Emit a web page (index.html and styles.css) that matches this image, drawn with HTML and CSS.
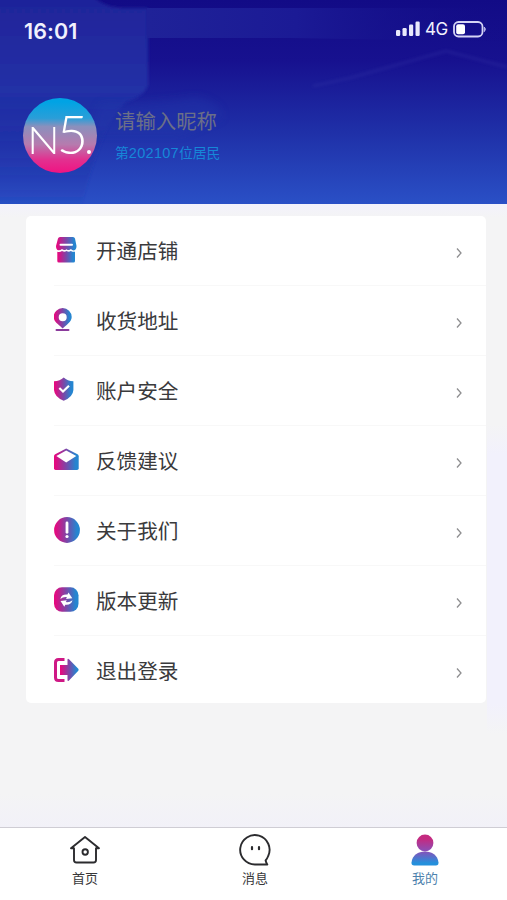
FILE: index.html
```html
<!DOCTYPE html>
<html lang="zh-CN">
<head>
  <meta charset="UTF-8">
  <meta name="viewport" content="width=device-width, initial-scale=1.0">
  <title>我的</title>
  <link rel="stylesheet" href="styles.css">
</head>
<body>
  <!-- shared gradients for the icons -->
  <svg class="defs" width="0" height="0">
    <defs>
      <linearGradient id="grad" x1="0" y1="0" x2="1" y2="0">
        <stop offset="0.05" stop-color="#e5097f"/>
        <stop offset="0.5" stop-color="#7a48a8"/>
        <stop offset="0.88" stop-color="#2585d0"/>
      </linearGradient>
      <linearGradient id="gradUser" gradientUnits="userSpaceOnUse" x1="0" y1="2" x2="0" y2="32">
        <stop offset="0.1" stop-color="#c42a80"/>
        <stop offset="0.5" stop-color="#8a4fb8"/>
        <stop offset="0.9" stop-color="#2490dc"/>
      </linearGradient>
    </defs>
  </svg>

  <header class="header">
    <svg class="header-bg" width="507" height="204" viewBox="0 0 507 204">
      <defs>
        <linearGradient id="bgMain" x1="0" y1="0" x2="0" y2="1">
          <stop offset="0" stop-color="#120b86"/>
          <stop offset="0.3" stop-color="#17118f"/>
          <stop offset="0.65" stop-color="#1f30a8"/>
          <stop offset="1" stop-color="#2a50c6"/>
        </linearGradient>
        <linearGradient id="bgLeft" x1="0" y1="0" x2="0" y2="1">
          <stop offset="0" stop-color="#1f2298"/>
          <stop offset="0.45" stop-color="#2030a6"/>
          <stop offset="1" stop-color="#2030a8" stop-opacity="0"/>
        </linearGradient>
        <linearGradient id="bgBand" x1="0" y1="0" x2="1" y2="0">
          <stop offset="0" stop-color="#1f2298"/>
          <stop offset="0.4" stop-color="#1b1a95"/>
          <stop offset="1" stop-color="#120b86" stop-opacity="0"/>
        </linearGradient>
        <filter id="soft"><feGaussianBlur stdDeviation="1.5"/></filter>
        <filter id="softer" x="-20%" width="140%" y="-20%" height="140%"><feGaussianBlur stdDeviation="4"/></filter>
      </defs>
      <rect width="507" height="204" fill="url(#bgMain)"/>
      <path d="M-10 -10H88Q100 8 125 8H148V85Q144 97 126 102Q100 125 80 214H-10Z" fill="url(#bgLeft)" filter="url(#soft)"/>
      <path d="M147 8H520V42L290 38H147Z" fill="url(#bgBand)"/>
      <path d="M313 86L350 78L446 51L507 67" fill="none" stroke="#3434a6" stroke-width="3" opacity="0.3" filter="url(#soft)"/>
      <path d="M100 104Q160 103 195 97Q222 102 222 118L180 135H90Z" fill="#2338aa" opacity="0.4" filter="url(#softer)"/>
    </svg>

    <div class="status-bar">
      <span class="time">16:01</span>
      <div class="status-right">
        <svg width="24" height="16" viewBox="0 0 24 16" fill="#e9e9fb">
          <rect x="0" y="9" width="4.2" height="6" rx="1.2"/>
          <rect x="6.5" y="7" width="4.2" height="8" rx="1.2"/>
          <rect x="13" y="3.5" width="4.2" height="11.5" rx="1.2"/>
          <rect x="19.5" y="0.5" width="4.2" height="14.5" rx="1.2"/>
        </svg>
        <span class="network">4G</span>
        <svg width="34" height="17" viewBox="0 0 34 17">
          <rect x="1" y="1" width="28.5" height="14.5" rx="4.5" fill="none" stroke="#d5d4f5" stroke-width="1.8"/>
          <rect x="3.2" y="3.2" width="8.8" height="10" rx="2" fill="#fff"/>
          <path d="M31.3 6Q33.5 8.2 31.3 10.6Z" fill="#b9b7e8" stroke="#b9b7e8"/>
        </svg>
      </div>
    </div>

    <div class="profile">
      <div class="avatar"><span class="avatar-n">N</span><span class="avatar-5">5</span><span class="avatar-dot"></span></div>
      <div class="profile-info">
        <div class="nickname">请输入昵称</div>
        <div class="resident">第<span>202107</span>位居民</div>
      </div>
    </div>
  </header>

  <main class="content">
    <ul class="menu">
      <li class="menu-item">
        <svg class="icon" viewBox="0 0 26 26">
          <path d="M6 0H19Q20.5 0 21 1.500L22.500 9Q22.500 13 19.800 13.400Q18 13.400 16.900 12Q15 14 12.500 12.200Q10 14 8 12Q6.500 13.400 4.500 13.300Q2 13 2 9L4 1.500Q4.500 0 6 0Z" fill="url(#grad)"/>
          <path d="M3.300 14.700Q6 15.300 8 14Q10.500 15.400 12.500 14Q14.700 15.400 16.900 14Q19 15.200 21 14.700V24Q21 25.500 19.500 25.500H4.800Q3.300 25.500 3.300 24Z" fill="url(#grad)"/>
          <path d="M6.500 7.700H18" stroke="#fff" stroke-width="2" stroke-linecap="round"/>
        </svg>
        <span class="menu-text">开通店铺</span>
        <svg class="arrow" viewBox="0 0 6 12"><path d="M1 1.500L5 6L1 10.500"/></svg>
      </li>
      <li class="menu-item">
        <svg class="icon" viewBox="0 0 26 26">
          <path fill-rule="evenodd" d="M8.700 1A9 9 0 0 1 17.700 10C17.700 15 12 18 8.700 21.500C5.500 18 -0.300 15 -0.300 10A9 9 0 0 1 8.700 1ZM8.700 6.200A4 4 0 1 0 8.700 14.200A4 4 0 1 0 8.700 6.200Z" fill="url(#grad)"/>
          <rect x="1.500" y="22" width="14" height="2" rx="1" fill="#8b3b9c"/>
        </svg>
        <span class="menu-text">收货地址</span>
        <svg class="arrow" viewBox="0 0 6 12"><path d="M1 1.500L5 6L1 10.500"/></svg>
      </li>
      <li class="menu-item">
        <svg class="icon" viewBox="0 0 26 26">
          <path d="M9.700 0.500Q13.500 4 19.400 4.200V13Q19 20 9.700 23.800Q0.500 20 0 13V4.200Q6 4 9.700 0.500Z" fill="url(#grad)"/>
          <path d="M5.300 11L9 14.500L15 8.700" fill="none" stroke="#fff" stroke-width="2.200"/>
        </svg>
        <span class="menu-text">账户安全</span>
        <svg class="arrow" viewBox="0 0 6 12"><path d="M1 1.500L5 6L1 10.500"/></svg>
      </li>
      <li class="menu-item">
        <svg class="icon" viewBox="0 0 26 26">
          <path d="M12.200 1.500L23.500 7.300Q24.700 8 24.700 9.300V21.200Q24.700 23 23 23H1.600Q0 23 0 21.200V9.300Q0 8 1.200 7.300Z" fill="url(#grad)"/>
          <path d="M12.200 3.500L22.300 9.100L12.200 15.400L2.300 9.100Z" fill="#fff"/>
        </svg>
        <span class="menu-text">反馈建议</span>
        <svg class="arrow" viewBox="0 0 6 12"><path d="M1 1.500L5 6L1 10.500"/></svg>
      </li>
      <li class="menu-item">
        <svg class="icon" viewBox="0 0 26 26">
          <circle cx="13" cy="13" r="12.900" fill="url(#grad)"/>
          <path d="M13 6V15.300" stroke="#fff" stroke-width="2.800" stroke-linecap="round"/>
          <circle cx="13" cy="19.500" r="1.600" fill="#fff"/>
        </svg>
        <span class="menu-text">关于我们</span>
        <svg class="arrow" viewBox="0 0 6 12"><path d="M1 1.500L5 6L1 10.500"/></svg>
      </li>
      <li class="menu-item">
        <svg class="icon" viewBox="0 0 26 26">
          <rect x="0" y="0.300" width="24.500" height="24.500" rx="8" fill="url(#grad)"/>
          <path d="M6.300 12Q7.500 7 13.500 7.600L14.500 5.600L18.300 11.300L12 12L13 10.200Q9.500 9.500 6.300 12Z" fill="#fff"/>
          <path d="M18.500 13.300Q17.300 18.300 11.300 17.700L10.300 19.700L6.500 14L12.800 13.300L11.800 15.100Q15.300 15.800 18.500 13.300Z" fill="#fff"/>
        </svg>
        <span class="menu-text">版本更新</span>
        <svg class="arrow" viewBox="0 0 6 12"><path d="M1 1.500L5 6L1 10.500"/></svg>
      </li>
      <li class="menu-item">
        <svg class="icon" viewBox="0 0 26 26">
          <path d="M10.500 2.500H4.500Q1.500 2.500 1.500 5.500V20.500Q1.500 23.500 4.500 23.500H10.500" fill="none" stroke="#cf1885" stroke-width="3"/>
          <path d="M6 8H13.500V2.800Q13.500 1 15 2.200L24.300 11.800Q25 12.800 24.300 13.800L15 23.500Q13.500 24.800 13.500 23V18H6Z" fill="url(#grad)"/>
        </svg>
        <span class="menu-text">退出登录</span>
        <svg class="arrow" viewBox="0 0 6 12"><path d="M1 1.500L5 6L1 10.500"/></svg>
      </li>
    </ul>
  </main>

  <nav class="tabbar">
    <a class="tab">
      <svg width="34" height="34" viewBox="0 0 34 34" fill="none" stroke="#2b2b2e" stroke-width="1.900" stroke-linejoin="round" stroke-linecap="round">
        <path d="M6 14.200H3L17 3L31 14.200H28V26Q28 28.500 25.500 28.500H8.500Q6 28.500 6 26Z"/>
        <circle cx="17.200" cy="18" r="2.700"/>
      </svg>
      <span>首页</span>
    </a>
    <a class="tab">
      <svg width="34" height="34" viewBox="0 0 34 34" fill="none" stroke="#2b2b2e" stroke-width="1.900" stroke-linejoin="round" stroke-linecap="round">
        <path d="M17 30.500A14.700 14.700 0 1 1 30.200 22Q29 25 27.600 26.500Q28.200 29 29.300 30.500Z"/>
        <path d="M14 13.200V15.200M21 13.200V15.200" stroke-width="2.200"/>
      </svg>
      <span>消息</span>
    </a>
    <a class="tab active">
      <svg width="34" height="34" viewBox="0 0 34 34" fill="url(#gradUser)">
        <path d="M3.500 28.500C4.500 21 10 17.500 17 17.500S29.500 21 30.500 28.500Q30.700 31.500 27.800 31.500H6.200Q3.300 31.500 3.500 28.500Z"/>
        <circle cx="17" cy="9" r="8.400"/>
      </svg>
      <span>我的</span>
    </a>
  </nav>
</body>
</html>
```

FILE: styles.css
```css
* {
  box-sizing: border-box;
}

body {
  margin: 0;
  height: 900px;
  display: flex;
  flex-direction: column;
  background-color: #f4f4f5;
  font-family: "Liberation Sans", "Noto Sans CJK SC", sans-serif;
  overflow: hidden;
}

.defs {
  position: absolute;
}

/* header */
.header {
  position: relative;
  height: 204px;
  flex-shrink: 0;
  background-color: #2030a8;
}

.header-bg {
  position: absolute;
  top: 0;
  left: 0;
}

.status-bar {
  position: relative;
  height: 60px;
  padding: 1px 20px 0 24px;
  display: flex;
  justify-content: space-between;
  align-items: center;
  color: #f1f1fd;
}

.time {
  font-family: Inter, sans-serif;
  font-size: 21.5px;
  font-weight: 600;
  letter-spacing: 0.1px;
}

.status-right {
  display: flex;
  align-items: center;
  gap: 5px;
  padding-bottom: 3px;
}

.network {
  font-family: Inter, sans-serif;
  font-size: 17px;
  line-height: 17px;
  width: 23px;
  letter-spacing: -0.5px;
}

.profile {
  position: relative;
  display: flex;
  padding: 38px 0 0 23px;
}

.avatar {
  width: 74px;
  height: 75px;
  padding-left: 6px;
  border-radius: 50%;
  background: linear-gradient(#00a3e4 5%, #2a9ed8 27%, #8a90bd 38%, #b67bae 62%, #e23190 82%, #f01382 100%);
  color: #fff;
  display: flex;
  align-items: baseline;
  font-family: Lato, sans-serif;
  font-weight: 300;
  line-height: 71px;
}

.avatar-n {
  font-size: 38px;
  transform: scaleX(1.13);
}

.avatar-5 {
  font-size: 54px;
  margin-left: -1px;
}

.avatar-dot {
  width: 4px;
  height: 4px;
  margin-left: -1px;
  border-radius: 50%;
  background-color: #fff;
}

.profile-info {
  padding: 9px 0 0 18px;
}

.nickname {
  font-size: 20.4px;
  line-height: 30px;
  color: #6b6f88;
}

.resident {
  margin-top: 6px;
  font-size: 13.8px;
  line-height: 20px;
  color: #1687d8;
}

.resident span {
  font-size: 14.5px;
  letter-spacing: 0.3px;
}

/* menu list */
.content {
  flex: 1;
  padding: 12px 21px 0 26px;
  background:
    linear-gradient(transparent 220px, #f2f1fc 250px, #f2f1fc 500px, transparent 530px) right / 20px 100% no-repeat,
    linear-gradient(#f3f2fb, #f4f4f5 14px, #f4f4f5 590px, #f2f1f8);
}

.menu {
  margin: 0;
  padding: 0;
  list-style: none;
  height: 487px;
  background-color: #fff;
  border-radius: 5px;
}

.menu-item {
  height: 70px;
  margin-left: 28px;
  padding-right: 24px;
  display: flex;
  align-items: center;
  border-bottom: 1px solid #f8f8f8;
}

.menu-item:last-child {
  border-bottom: none;
}

.icon {
  width: 26px;
  height: 26px;
  margin-bottom: 2px;
}

.menu-text {
  flex: 1;
  margin: 1px 0 0 16px;
  font-size: 20.6px;
  line-height: 31px;
  color: #3a3a3c;
}

.arrow {
  width: 6px;
  height: 12px;
  margin-top: 4px;
  fill: none;
  stroke: #8e8e90;
  stroke-width: 1.3;
}

/* bottom tabs */
.tabbar {
  height: 73px;
  flex-shrink: 0;
  display: flex;
  background-color: #fff;
  border-top: 1px solid #cfcdd4;
}

.tab {
  width: 170px;
  flex-shrink: 0;
  display: flex;
  flex-direction: column;
  align-items: center;
  padding-top: 5px;
  font-size: 13px;
  line-height: 20px;
  color: #38383a;
}

.tab svg {
  margin-top: 1px;
}

.tab span {
  margin-top: 1px;
}

.tab.active {
  color: #4d82ad;
}
```
